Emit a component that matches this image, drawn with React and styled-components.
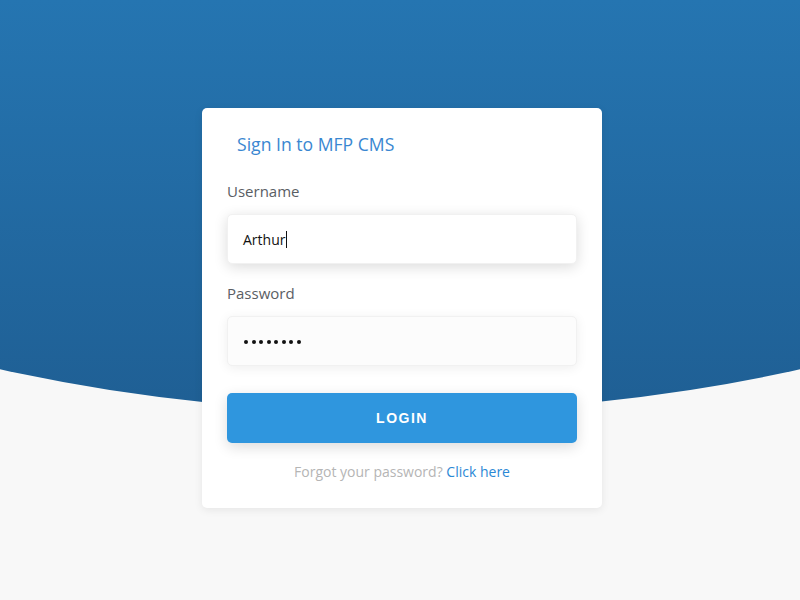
import React from "react";
import styled, { createGlobalStyle } from "styled-components";

const Global = createGlobalStyle`
  html, body { margin: 0; padding: 0; }
  body {
    background: #f8f8f8;
    font-family: "Open Sans", "Liberation Sans", sans-serif;
    overflow: hidden;
  }
`;

const Page = styled.div`
  position: relative;
  min-height: 600px;
  width: 800px;
  overflow: hidden;
  display: flex;
  flex-direction: column;
  align-items: center;
  padding: 108px 0 0 4px;
  box-sizing: border-box;
  &::before {
    content: "";
    position: absolute;
    left: -600px;
    top: -200px;
    width: 2000px;
    height: 612px;
    border-radius: 0 0 1000px 1000px / 0 0 511px 511px;
    background: linear-gradient(to bottom, #2575b1 200px, #1f5f94 612px);
    z-index: 0;
  }
`;

const Card = styled.div`
  position: relative;
  z-index: 1;
  width: 400px;
  box-sizing: border-box;
  background: #fff;
  border-radius: 5px;
  box-shadow: 0 2px 8px rgba(0, 0, 0, 0.08);
  padding: 24px 25px 26px;
  display: flex;
  flex-direction: column;
`;

const Title = styled.h1`
  margin: 0 0 25px 10px;
  font-size: 17.6px;
  line-height: 24px;
  font-weight: 400;
  color: #3a87d1;
`;

const Label = styled.label`
  display: block;
  font-size: 15px;
  line-height: 20px;
  color: #5a5e64;
  margin-bottom: 13px;
`;

const Field = styled.div`
  height: 50px;
  box-sizing: border-box;
  border-radius: 5px;
  background: ${(p) => (p.$muted ? "#fcfcfc" : "#fff")};
  box-shadow: ${(p) =>
    p.$muted
      ? "0 2px 12px rgba(0,0,0,0.07)"
      : "0 3px 14px rgba(0,0,0,0.14)"};
  border: 1px solid #f1f1f1;
  padding: 0 15px;
  display: flex;
  align-items: center;
  font-size: 14px;
  color: #111;
  margin-bottom: ${(p) => p.$gap}px;
`;

const Caret = styled.span`
  display: inline-block;
  width: 1px;
  height: 17px;
  background: #111;
  margin-left: 1px;
`;

const Mask = styled.span`
  display: flex;
  gap: 3.5px;
  margin: 2px 0 0 1px;
`;

const Dot = styled.span`
  width: 4px;
  height: 4px;
  border-radius: 50%;
  background: #111;
`;

const Button = styled.button`
  height: 50px;
  border: none;
  border-radius: 5px;
  background: #2f96de;
  color: #fff;
  font-family: "Liberation Sans", Arial, sans-serif;
  font-weight: 700;
  font-size: 14px;
  letter-spacing: 1.5px;
  box-shadow: 0 4px 14px rgba(0, 0, 0, 0.14);
  margin-bottom: 19px;
  cursor: pointer;
`;

const Forgot = styled.p`
  margin: 0;
  text-align: center;
  font-size: 14px;
  line-height: 20px;
  color: #b5b5b5;
`;

const Link = styled.a`
  color: #2b88d5;
  text-decoration: none;
`;

export default function App() {
  return (
    <>
      <Global />
      <Page>
        <Card>
          <Title>Sign In to MFP CMS</Title>
          <Label>Username</Label>
          <Field $gap={19}>
            Arthur
            <Caret />
          </Field>
          <Label>Password</Label>
          <Field $muted $gap={27}>
            <Mask aria-label="password">
              {Array.from({ length: 8 }, (_, i) => (
                <Dot key={i} />
              ))}
            </Mask>
          </Field>
          <Button>LOGIN</Button>
          <Forgot>
            Forgot your password? <Link href="#">Click here</Link>
          </Forgot>
        </Card>
      </Page>
    </>
  );
}
